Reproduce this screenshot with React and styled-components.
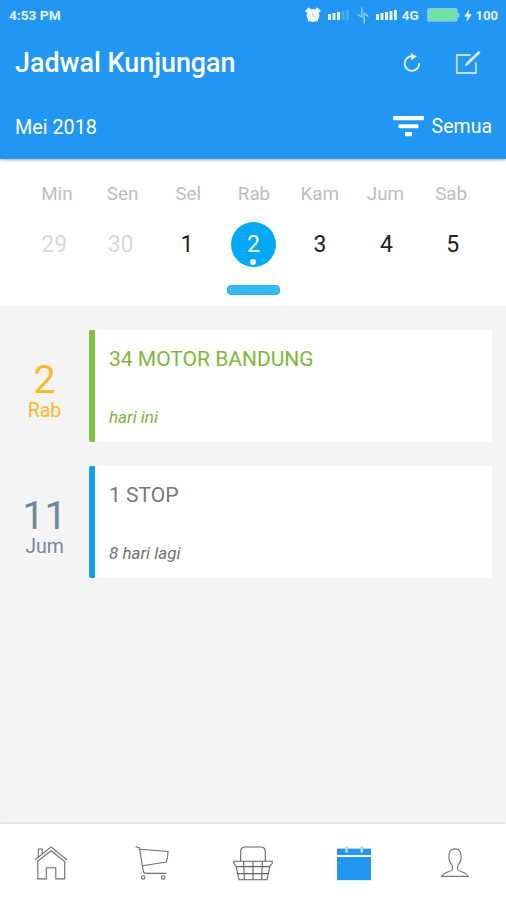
import React from 'react'
import styled, { createGlobalStyle } from 'styled-components'

const days = ['Min', 'Sen', 'Sel', 'Rab', 'Kam', 'Jum', 'Sab']

const dates = [
  { date: 29, muted: true },
  { date: 30, muted: true },
  { date: 1 },
  { date: 2, selected: true },
  { date: 3 },
  { date: 4 },
  { date: 5 },
]

const visits = [
  { date: 2, day: 'Rab', title: '34 MOTOR BANDUNG', note: 'hari ini', dateColor: '#fbb82a', bar: '#7fc142', color: '#7cb93a', noteColor: '#7cb342' },
  { date: 11, day: 'Jum', title: '1 STOP', note: '8 hari lagi', dateColor: '#71889a', bar: '#0fa0f0', color: '#777', noteColor: '#707070' },
]

const AlarmIcon = () => (
  <svg width="16" height="16" viewBox="0 0 16 16">
    <circle cx="8" cy="8.5" r="6.4" fill="#f2f8fe" />
    <path d="M2 4 4 2.2M14 4 12 2.2" stroke="#f2f8fe" strokeWidth="3" strokeLinecap="round" />
    <path d="M4.2 13 3.2 14.4M11.8 13l1 1.4" stroke="#f2f8fe" strokeWidth="1.4" />
    <path d="M7.2 5.5 8.2 9l2.6 1.2" fill="none" stroke="#b5d8f8" strokeWidth="1" />
  </svg>
)

const SignalIcon = ({ level }) => (
  <svg width="22" height="12" viewBox="0 0 22 12">
    {[6, 7, 8, 9, 10].map((h, i) => (
      <rect key={i} x={i * 4.5} y={11 - h} width="3" height={h} fill="#e6f3fe" opacity={i < level ? 1 : 0.2} />
    ))}
  </svg>
)

const DataIcon = () => (
  <svg width="12" height="17" viewBox="0 0 12 17" fill="none" stroke="#8fc8fa" strokeWidth="1.6">
    <path d="M4.8 0.5V10.5M0.6 7 4.8 10.4" />
    <path d="M7.2 16.5V5.5M11.4 9.6 7.2 6.2" />
  </svg>
)

const BatteryIcon = () => (
  <svg width="33" height="14" viewBox="0 0 33 14">
    <rect x="0.8" y="0.8" width="29" height="12.2" rx="1.5" fill="#6fe3a0" stroke="#8dc6f5" strokeWidth="1.5" />
    <rect x="30" y="4.4" width="2.4" height="5" rx="1" fill="#8dc6f5" />
  </svg>
)

const BoltIcon = () => (
  <svg width="8" height="13" viewBox="0 0 8 13" fill="#f2f8fe">
    <path d="M5.4 0 0.2 7.4H3.6L2.4 13 7.8 5.2H4.4Z" />
  </svg>
)

const RefreshIcon = () => (
  <svg width="18" height="20" viewBox="0 0 18 20">
    <path d="M9 3.2A7.3 7.3 0 1 0 16.2 10" fill="none" stroke="#f2f8fe" strokeWidth="1.7" />
    <path d="M8.2 0.2 13.8 3.5 8.2 7.2Z" fill="#fff" />
  </svg>
)

const EditIcon = () => (
  <svg width="26" height="24" viewBox="0 0 26 24" fill="none">
    <path d="M15.5 4H1.8V22H21V11.2" stroke="#c3def5" strokeWidth="1.8" />
    <path d="M22.6 2.7 12.4 12.6" stroke="#dcecfa" strokeWidth="2.8" />
    <path d="M24.6 0.8 22.4 2.9" stroke="#dcecfa" strokeWidth="2.8" />
    <path d="M10 15.2 11.1 11.4 13.7 13.9Z" fill="#dcecfa" />
  </svg>
)

const FilterIcon = () => (
  <svg width="31" height="21" viewBox="0 0 31 21" fill="#fff">
    <rect x="0" y="0" width="31" height="4.2" rx="1.2" />
    <rect x="5.5" y="8.2" width="20" height="4" rx="1.2" />
    <rect x="12" y="16" width="7.2" height="4.2" rx="0.8" />
  </svg>
)

const HomeIcon = () => (
  <svg width="34" height="34" viewBox="0 0 34 34" fill="none" stroke="#6c6c6c" strokeWidth="1.1">
    <path d="M1 14 17 0.9 33 14" />
    <path d="M3.3 15.5 17 4.7 30.7 15.5" />
    <path d="M3.8 15V32.9H12.3V21.8H21.8V32.9H30.7V15" />
    <path d="M4.3 11.2V3H8.2V8" />
  </svg>
)

const CartIcon = () => (
  <svg width="34" height="36" viewBox="0 0 34 36" fill="none" stroke="#6c6c6c" strokeWidth="1.1">
    <path d="M0.5 1.5 4.4 3 8.2 25.6Q8.6 28.4 11 28.4H31.5" />
    <path d="M4.8 4.3 33 6.4Q33 12 31.3 17L7.6 20.8" />
    <circle cx="8.2" cy="32.4" r="1.7" />
    <circle cx="28.2" cy="32.4" r="1.7" />
  </svg>
)

const BasketIcon = () => (
  <svg width="40" height="35" viewBox="0 0 40 35" fill="none" stroke="#626262" strokeWidth="1.1">
    <path d="M7.7 15V5.5Q7.7 1 12.4 1H27.6Q32.3 1 32.3 5.5V15" />
    <path d="M0.8 15.3H39.2V17.6L37 20 34 33.8H6L3 20 0.8 17.6Z" />
    <path d="M2.8 20.6H37.2M4.2 27.6H35.8M10.6 15.3 11.4 33.8M20 15.3V33.8M29.4 15.3 28.6 33.8" />
  </svg>
)

const CalendarIcon = () => (
  <svg width="34" height="35" viewBox="0 0 34 35">
    <rect y="2.6" width="34" height="6.4" fill="#2196f3" />
    <rect y="11" width="34" height="23.2" fill="#2196f3" />
    <rect x="8.4" y="0.8" width="2.4" height="6" rx="1.2" fill="#d9ebfb" stroke="#7bb9ef" strokeWidth="0.7" />
    <rect x="23.6" y="0.8" width="2.4" height="6" rx="1.2" fill="#d9ebfb" stroke="#7bb9ef" strokeWidth="0.7" />
  </svg>
)

const ProfileIcon = () => (
  <svg width="28" height="30" viewBox="0 0 28 30" fill="none" stroke="#777" strokeWidth="1.2">
    <path d="M14 0.9C9.8 0.9 7.9 3.4 8 7C8 9.2 7.6 10.2 8.3 12C8.9 14.6 10 16 11.4 18V21.4C10.6 24 2.2 23.6 0.9 28.4H27.1C25.8 23.6 17.4 24 16.6 21.4V18C18 16 19.1 14.6 19.7 12C20.4 10.2 20 9.2 20 7C20.1 3.4 18.2 0.9 14 0.9Z" />
  </svg>
)

const tabs = [
  { name: 'home', Icon: HomeIcon },
  { name: 'cart', Icon: CartIcon },
  { name: 'basket', Icon: BasketIcon },
  { name: 'calendar', Icon: CalendarIcon },
  { name: 'profile', Icon: ProfileIcon },
]

const App = () => {
  return (
    <Screen>
      <GlobalStyle />
      <Header>
        <StatusBar>
          <Clock>4:53 PM</Clock>
          <AlarmIcon />
          <Signals>
            <SignalIcon level={3} />
            <DataIcon />
            <SignalIcon level={5} />
          </Signals>
          <Network>4G</Network>
          <BatteryIcon />
          <Charge>
            <BoltIcon />
            100
          </Charge>
        </StatusBar>
        <TitleBar>
          <Title>Jadwal Kunjungan</Title>
          <IconButton aria-label="refresh"><RefreshIcon /></IconButton>
          <IconButton aria-label="edit"><EditIcon /></IconButton>
        </TitleBar>
        <FilterBar>
          <Month>Mei 2018</Month>
          <FilterButton>
            <FilterIcon />
            Semua
          </FilterButton>
        </FilterBar>
      </Header>

      <Calendar>
        <DayNames>
          {days.map((day) => <DayName key={day}>{day}</DayName>)}
        </DayNames>
        <Dates>
          {dates.map(({ date, muted, selected }) => (
            <DateCell key={date} $muted={muted} $selected={selected}>{date}</DateCell>
          ))}
        </Dates>
        <Handle />
      </Calendar>

      <VisitList>
        {visits.map((visit) => (
          <Visit key={visit.title}>
            <VisitDate $color={visit.dateColor}>
              <VisitNumber>{visit.date}</VisitNumber>
              <VisitDay>{visit.day}</VisitDay>
            </VisitDate>
            <VisitCard $bar={visit.bar}>
              <VisitTitle $color={visit.color}>{visit.title}</VisitTitle>
              <VisitNote $color={visit.noteColor}>{visit.note}</VisitNote>
            </VisitCard>
          </Visit>
        ))}
      </VisitList>

      <TabBar>
        {tabs.map(({ name, Icon }) => (
          <Tab key={name} aria-label={name}><Icon /></Tab>
        ))}
      </TabBar>
    </Screen>
  )
}

const GlobalStyle = createGlobalStyle`
  * {
    box-sizing: border-box;
  }

  body {
    margin: 0;
    font-family: Roboto, 'Liberation Sans', sans-serif;
  }

  button {
    font-family: inherit;
    border: none;
    background: none;
    padding: 0;
    cursor: pointer;
  }

  svg {
    display: block;
    flex-shrink: 0;
  }
`;

const Screen = styled.div`
  display: flex;
  flex-direction: column;
  width: 100%;
  height: 900px;
  background: #f4f4f4;
  overflow: hidden;
`;

const Header = styled.header`
  height: 159px;
  background: #2196f3;
  color: #fff;
  box-shadow: 0 1px 3px rgba(0, 0, 0, 0.35);
  z-index: 1;
`;

const StatusBar = styled.div`
  display: flex;
  align-items: center;
  height: 30px;
  padding: 0 8px 0 9px;
  font-size: 13px;
  font-weight: 700;
  color: #e6f3fe;
`;

const Clock = styled.span`
  flex: 1;
  font-size: 13.7px;
`;

const Signals = styled.div`
  display: flex;
  align-items: center;
  gap: 7px;
  margin-left: 7px;
`;

const Network = styled.span`
  margin: 0 8px 0 4px;
  font-size: 13.5px;
`;

const Charge = styled.div`
  display: flex;
  align-items: center;
  gap: 4px;
  margin-left: 4px;
`;

const TitleBar = styled.div`
  display: flex;
  align-items: center;
  height: 65px;
  padding: 0 25px 0 15px;
  gap: 34px;
`;

const Title = styled.h1`
  flex: 1;
  margin: 0;
  font-size: 26.9px;
  font-weight: 500;
`;

const IconButton = styled.button`
  display: flex;
`;

const FilterBar = styled.div`
  display: flex;
  align-items: center;
  justify-content: space-between;
  height: 62px;
  padding: 0 14px 0 15px;
`;

const Month = styled.span`
  font-size: 19.8px;
  padding-top: 2px;
`;

const FilterButton = styled.button`
  display: flex;
  align-items: center;
  gap: 8px;
  color: #fff;
  font-size: 19.5px;
`;

const Calendar = styled.section`
  height: 147px;
  padding-top: 22px;
  background: #fff;
`;

const DayNames = styled.div`
  display: grid;
  grid-template-columns: repeat(7, 1fr);
  padding: 0 22px 0 24px;
`;

const DayName = styled.span`
  font-size: 18.8px;
  line-height: 26px;
  text-align: center;
  color: #b6bec8;
`;

const Dates = styled.div`
  display: grid;
  grid-template-columns: repeat(7, 1fr);
  justify-items: center;
  margin-top: 15px;
  padding: 0 20px 0 21px;
`;

const DateCell = styled.div`
  position: relative;
  width: 45px;
  height: 45px;
  border-radius: 50%;
  font-size: 23px;
  line-height: 45px;
  text-align: center;
  color: ${(props) => (props.$selected ? '#fff' : props.$muted ? '#d5d9dd' : '#222')};
  background: ${(props) => (props.$selected ? '#03a9f4' : 'none')};

  &::after {
    content: '';
    display: ${(props) => (props.$selected ? 'block' : 'none')};
    position: absolute;
    left: 19.5px;
    bottom: 2px;
    width: 6px;
    height: 6px;
    border-radius: 50%;
    background: #fff;
  }
`;

const Handle = styled.div`
  width: 53px;
  height: 10px;
  margin: 18px auto 0;
  border: 1px solid #1bb0f2;
  border-radius: 4px;
  background: #3bbaf2;
`;

const VisitList = styled.main`
  flex: 1;
  display: flex;
  flex-direction: column;
  gap: 24px;
  padding: 23.5px 14px 0 0;
`;

const Visit = styled.article`
  display: flex;
  height: 112px;
`;

const VisitDate = styled.div`
  display: flex;
  flex-direction: column;
  align-items: center;
  width: 89px;
  padding-top: 29px;
  color: ${(props) => props.$color};
`;

const VisitNumber = styled.span`
  font-size: 39.5px;
  line-height: 41px;
`;

const VisitDay = styled.span`
  font-size: 19.5px;
  line-height: 22px;
`;

const VisitCard = styled.div`
  flex: 1;
  display: flex;
  flex-direction: column;
  justify-content: space-between;
  padding: 15px 14px 14.5px;
  border-left: 6px solid ${(props) => props.$bar};
  border-radius: 2px;
  background: #fff;
`;

const VisitTitle = styled.h2`
  margin: 0;
  font-size: 21px;
  font-weight: 400;
  line-height: 28px;
  color: ${(props) => props.$color};
`;

const VisitNote = styled.span`
  font-size: 17px;
  font-style: italic;
  line-height: 20px;
  color: ${(props) => props.$color};
`;

const TabBar = styled.nav`
  display: grid;
  grid-template-columns: repeat(5, 1fr);
  height: 76px;
  background: #fff;
  box-shadow: 0 -1px 3px rgba(0, 0, 0, 0.12);
`;

const Tab = styled.button`
  display: flex;
  align-items: center;
  justify-content: center;
  padding-top: 2px;
`;

export default App
